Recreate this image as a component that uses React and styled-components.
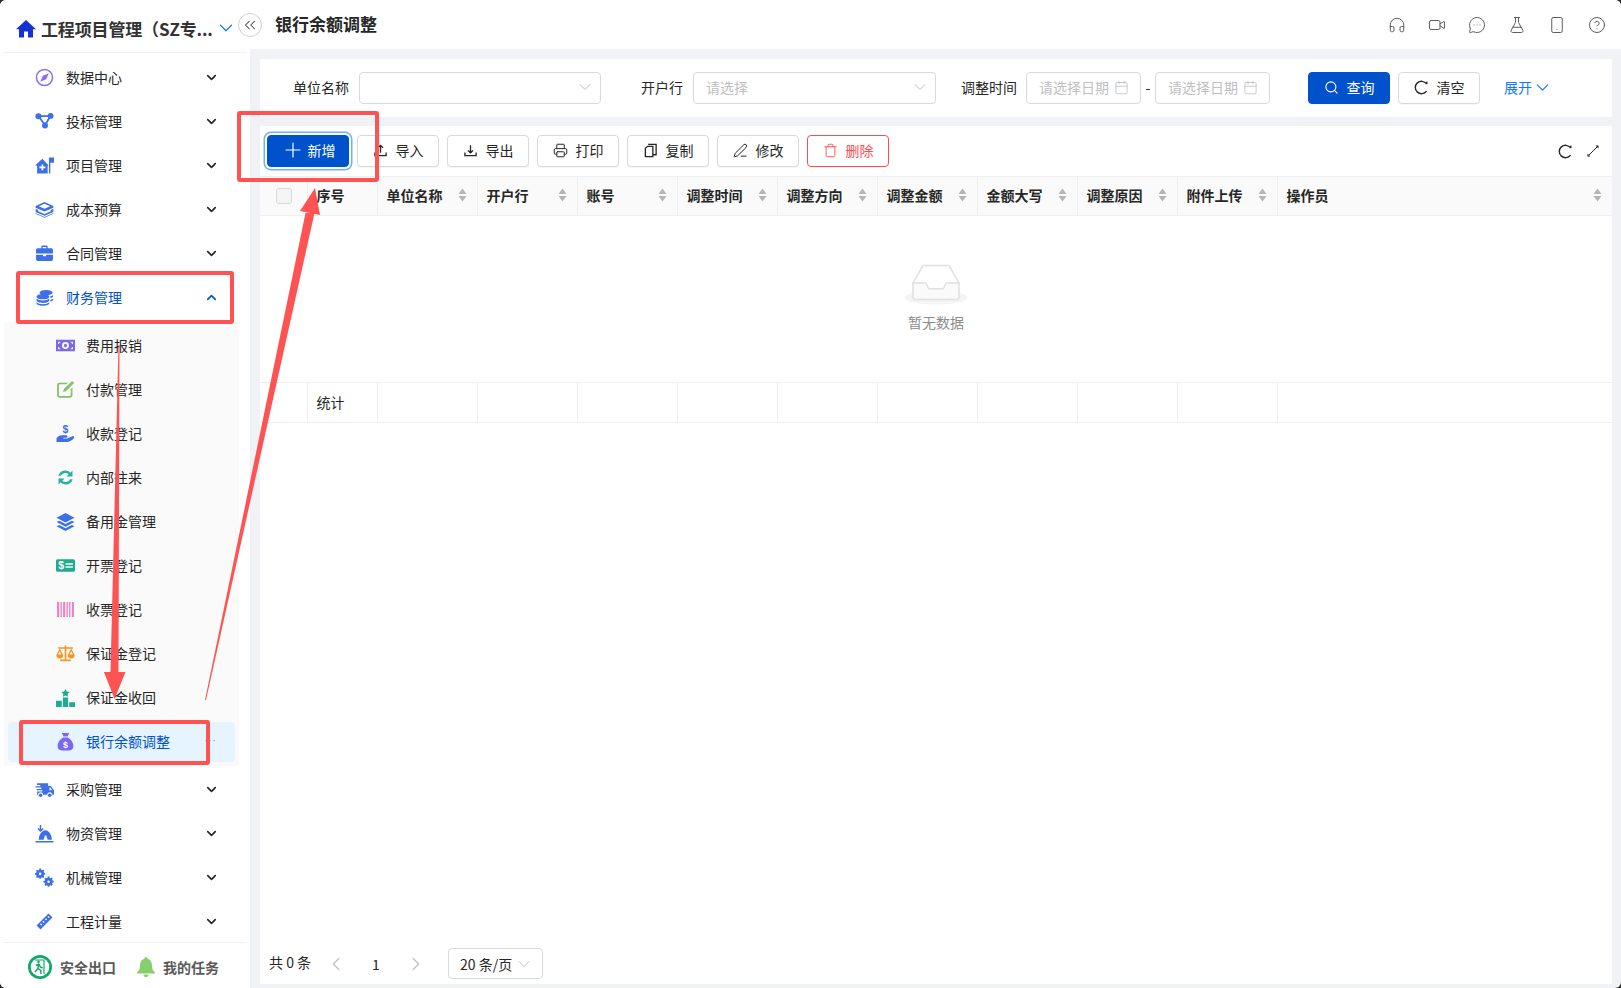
import React from "react";
import styled, { createGlobalStyle } from "styled-components";
import {
  Plus, Search, Printer, PenLine, Trash, ChevronDown, ChevronUp, ChevronsLeft,
  Calendar, Headphones, Video, MessageCircleMore, FlaskConical, Smartphone, CircleHelp,
  ChevronLeft, ChevronRight,
} from "lucide-react";

const FONT = `"Noto Sans CJK SC", "Noto Sans", "Liberation Sans", sans-serif`;

const Global = createGlobalStyle`
  html, body { margin: 0; padding: 0; background: #2b2b2b; }
  body { font-family: ${FONT}; font-size: 14px; color: #262626; }
  * { box-sizing: border-box; }
`;

const Page = styled.div`
  position: relative;
  width: 1621px;
  height: 988px;
  display: flex;
  overflow: hidden;
  border-radius: 6px;
  background: #f0f2f5;
`;

/* ---------- sidebar ---------- */
const Sidebar = styled.aside`
  width: 250px;
  flex: none;
  background: #fff;
  display: flex;
  flex-direction: column;
`;
const Brand = styled.div`
  height: 53px;
  margin: 0 4px;
  padding: 4px 0 0 12px;
  border-bottom: 1px solid #f0f0f0;
  display: flex;
  align-items: center;
  gap: 5px;
  flex: none;
`;
const BrandTitle = styled.div`
  width: 169px;
  font-size: 17px;
  font-weight: 700;
  color: #333;
  white-space: nowrap;
  letter-spacing: -0.15px;
`;
const Nav = styled.nav`
  flex: 1;
  padding-top: 3px;
  overflow: hidden;
`;
const NavRow = styled.div`
  height: 44px;
  padding: 0 31px 2px 35px;
  display: flex;
  align-items: center;
  color: ${(p) => (p.$active ? "#0052cc" : "#262626")};
  & > svg:first-child { flex: none; width: 19px; height: 19px; }
`;
const NavText = styled.span`
  margin-left: 12px;
  flex: 1;
`;
const SubMenu = styled.div`
  margin: 2px 11px 2px 4px;
  padding: 2px 0;
  background: #fafafa;
`;
const SubRow = styled.div`
  height: 44px;
  padding: 0 0 2px 52px;
  display: flex;
  align-items: center;
  color: #262626;
  & > svg:first-child { flex: none; width: 19px; height: 19px; }
`;
const SubSelected = styled.div`
  position: relative;
  height: 40px;
  margin: 2px 4px;
  padding: 0 0 2px 48px;
  display: flex;
  align-items: center;
  background: #e6f4ff;
  border-radius: 4px;
  color: #0052cc;
  & > svg:first-child { flex: none; width: 19px; height: 19px; }
`;
const SubText = styled.span`
  margin-left: 11px;
`;
const Dots = styled.span`
  position: absolute;
  right: 19px;
  top: 11px;
  font-family: "Liberation Sans", sans-serif;
  font-size: 12px;
  line-height: 14px;
  color: #6fb0f0;
`;
const SideFoot = styled.div`
  height: 46px;
  flex: none;
  margin: 0 4px;
  padding: 3px 0 0 24px;
  border-top: 1px solid #f0f0f0;
  display: flex;
  align-items: center;
  font-weight: 700;
  color: #595959;
`;
const FootLabel = styled.span`
  margin-left: ${(p) => p.$gap}px;
  margin-right: ${(p) => p.$after || 0}px;
`;
const Collapse = styled.button`
  position: absolute;
  left: 238px;
  top: 13px;
  width: 24px;
  height: 24px;
  padding: 0;
  border-radius: 50%;
  border: 1px solid #d0d0d0;
  background: #fff;
  color: #444;
  display: flex;
  align-items: center;
  justify-content: center;
`;

/* ---------- main ---------- */
const Main = styled.main`
  flex: 1;
  min-width: 0;
  display: flex;
  flex-direction: column;
`;
const TopBar = styled.header`
  height: 49px;
  flex: none;
  background: #fff;
  padding: 0 15px 0 25px;
  display: flex;
  align-items: center;
  justify-content: space-between;
`;
const PageTitle = styled.h1`
  margin: 0 0 2px;
  font-size: 17px;
  font-weight: 700;
  color: #262626;
`;
const TopIcons = styled.div`
  display: flex;
  gap: 22px;
  color: #595959;
  svg { width: 18px; height: 18px; display: block; }
`;
const FilterBar = styled.section`
  height: 58px;
  flex: none;
  margin: 10px 9px 9px 10px;
  padding: 0 0 0 33px;
  background: #fff;
  display: flex;
  align-items: center;
`;
const Label = styled.label`
  flex: none;
  margin-left: ${(p) => p.$gap || 0}px;
  margin-right: ${(p) => p.$mr || 9}px;
  padding-bottom: 2px;
  color: #262626;
`;
const Field = styled.div`
  width: ${(p) => p.$w}px;
  height: 32px;
  flex: none;
  padding: 0 ${(p) => p.$pr || 5}px 2px 12px;
  border: 1px solid #d9d9d9;
  border-radius: 4px;
  background: #fff;
  color: #bfbfbf;
  display: flex;
  align-items: center;
  justify-content: space-between;
  svg { width: ${(p) => p.$icon || 20}px; height: ${(p) => p.$icon || 20}px; flex: none; }
`;
const Dash = styled.span`
  width: 14px;
  padding-bottom: 2px;
  text-align: center;
  color: #262626;
`;
const Button = styled.button`
  height: 32px;
  width: ${(p) => p.$w || 82}px;
  flex: none;
  margin-left: ${(p) => p.$ml || 0}px;
  padding: 0 0 2px;
  border-radius: 4px;
  font: inherit;
  display: inline-flex;
  align-items: center;
  justify-content: center;
  gap: ${(p) => p.$gap || 8}px;
  border: 1px solid ${(p) => (p.$kind === "primary" ? "#0052cc" : p.$kind === "danger" ? "#ff4d4f" : "#d9d9d9")};
  background: ${(p) => (p.$kind === "primary" ? "#0052cc" : "#fff")};
  color: ${(p) => (p.$kind === "primary" ? "#fff" : p.$kind === "danger" ? "#ff4d4f" : "#262626")};
  box-shadow: ${(p) => (p.$ring ? "0 0 0 2px #fff, 0 0 0 3.5px #6fb1f5" : "0 1px 1px rgba(0,0,0,.04)")};
  svg { width: ${(p) => p.$icon || 15}px; height: ${(p) => p.$icon || 15}px; flex: none; }
`;
const ExpandLink = styled.span`
  margin-left: 24px;
  padding-bottom: 2px;
  color: #1677ff;
  display: inline-flex;
  align-items: center;
  gap: 0;
  svg { width: 21px; height: 21px; }
`;
const Card = styled.section`
  flex: 1;
  min-height: 0;
  margin: 0 9px 4px 10px;
  background: #fff;
  display: flex;
  flex-direction: column;
`;
const Toolbar = styled.div`
  height: 50px;
  flex: none;
  padding: 0 13px 0 7px;
  display: flex;
  align-items: center;
  gap: 8px;
`;
const ToolbarEnd = styled.div`
  margin-left: auto;
  display: flex;
  align-items: center;
  gap: 14px;
  color: #262626;
`;
const Row = styled.div`
  display: grid;
  grid-template-columns: 47.5px 70px repeat(9, 100px) 1fr;
  height: ${(p) => p.$h}px;
  flex: none;
  border-top: 1px solid #efefef;
  border-bottom: 1px solid #efefef;
  background: ${(p) => p.$bg || "#fff"};
`;
const Cell = styled.div`
  display: flex;
  align-items: center;
  padding: 0 9px 2px;
  border-right: 1px solid #efefef;
  font-weight: ${(p) => (p.$head ? 700 : 400)};
  color: #262626;
  justify-content: space-between;
  &:last-child { border-right: 0; }
`;
const CheckCell = styled.div`
  display: flex;
  align-items: center;
  justify-content: center;
  padding-left: 2px;
  border-right: 1px solid #efefef;
`;
const Check = styled.span`
  width: 16px;
  height: 16px;
  border: 1px solid #d9d9d9;
  border-radius: 3px;
  background: #f5f5f5;
`;
const Empty = styled.div`
  height: 166px;
  flex: none;
  padding-top: 48px;
  display: flex;
  flex-direction: column;
  align-items: center;
  color: #8c8c8c;
  svg { width: 64px; height: 41px; display: block; margin-bottom: 7px; }
`;
const Pager = styled.div`
  margin-top: auto;
  height: 36px;
  flex: none;
  padding: 0 0 5px 9px;
  display: flex;
  align-items: center;
  color: #262626;
`;
const PagerTotal = styled.span`
  width: 43px;
  padding-bottom: 3px;
  white-space: nowrap;
`;
const PagerArrow = styled.span`
  color: #bfbfbf;
  margin-left: ${(p) => p.$ml}px;
  display: flex;
  svg { width: 22px; height: 22px; }
`;
const PagerNum = styled.span`
  margin-left: 25px;
  width: 8px;
`;
const PageSize = styled.div`
  width: 95px;
  height: 31px;
  margin-left: 21px;
  padding: 0 8px 0 11px;
  border: 1px solid #d9d9d9;
  border-radius: 4px;
  display: flex;
  align-items: center;
  justify-content: space-between;
  svg { width: 20px; height: 20px; color: #bfbfbf; }
`;
const Overlay = styled.svg`
  position: absolute;
  left: 0;
  top: 0;
  width: 1621px;
  height: 988px;
  pointer-events: none;
`;

/* ---------- drawings ---------- */
const BLUE = "#3c6fe8";
const I = ({ children, c = BLUE }) => (
  <svg viewBox="0 0 18 18" fill={c}>{children}</svg>
);
const icons = {
  compass: (
    <I c="#8a6cf0">
      <circle cx="9" cy="9" r="7.6" fill="none" stroke="#8a6cf0" strokeWidth="1.4" />
      <path d="M13 5 10.6 10.6 5 13 7.4 7.4Z" />
    </I>
  ),
  share: (
    <I>
      <path d="M3.500 4h11M3.500 4l6 8.500M14.500 4l-5 8.500" stroke={BLUE} strokeWidth="1.700" fill="none" />
      <circle cx="3.300" cy="4" r="2.900" /><circle cx="14.800" cy="3.700" r="2.700" /><circle cx="9.500" cy="12.800" r="2.800" />
    </I>
  ),
  house: (
    <I>
      <path d="M7 2.700 0 9h2v7.600h10V9h1ZM6.200 8h1.600v2h2v1.600h-2v2H6.200v-2h-2V10h2Z" fillRule="evenodd" />
      <path d="M13.200 1.500h1.300v15.100h-1.300zM14.500 1.500H18v5h-3.500z" />
    </I>
  ),
  layers: (
    <I>
      <path d="M9 2 17.400 5.600v1.700L9 11 .6 7.300V5.600ZM9 3.600 3.600 6 9 8.400 14.400 6Z" fillRule="evenodd" />
      <path d="M.6 8.300 3 9.400v1.200l6 2.600 6-2.600V9.400l2.400-1.100v3L9 15 .6 11.300ZM.6 12.200 9 16l8.400-3.800V13L9 16.900.6 13Z" />
    </I>
  ),
  case: (
    <I>
      <path d="M6 4V2.500A1 1 0 0 1 7 1.500h4a1 1 0 0 1 1 1V4h3.500A1.500 1.500 0 0 1 17 5.500V9H1V5.500A1.500 1.500 0 0 1 2.500 4ZM7.300 4h3.400V2.800H7.300Z" fillRule="evenodd" />
      <path d="M1 10.200h6.500v1.500h3v-1.500H17v4.300a1.500 1.500 0 0 1-1.500 1.500h-13A1.500 1.500 0 0 1 1 14.500Z" />
    </I>
  ),
  coins: (
    <I>
      <ellipse cx="10.500" cy="4.400" rx="6.200" ry="2.600" />
      <path d="M1.500 8.200c0-1.400 2.600-2.500 6-2.500s6 1.100 6 2.500-2.600 2.500-6 2.500-6-1.100-6-2.500Z" />
      <path d="M1.500 10c1 1.200 3.300 1.800 6 1.800s5-.6 6-1.800v1.600c0 1.400-2.600 2.500-6 2.500s-6-1.100-6-2.500Z" />
      <path d="M1.500 13.500c1 1.200 3.300 1.800 6 1.800s5-.6 6-1.800v1c0 1.400-2.600 2.300-6 2.300s-6-.9-6-2.300ZM14.500 7.800c1.300-.3 2.400-.8 2.700-1.500v1.200c0 .9-1 1.500-2.700 1.900ZM14.500 11.300c1.300-.3 2.400-.8 2.700-1.500v1.200c0 .9-1 1.500-2.700 1.900Z" />
    </I>
  ),
  money: (
    <I c="#7b68ee">
      <path d="M0 3.500h18v11H0ZM9 5.700a3.300 3.300 0 1 0 0 6.600 3.300 3.300 0 0 0 0-6.600ZM9 7.300c.8 0 1.400.7 1.400 1.700S9.800 10.700 9 10.700 7.600 10 7.600 9 8.200 7.300 9 7.300ZM2 5.500v2h1v-1h1v-1ZM14 5.500v1h1v1h1v-2ZM2 10.500v2h2v-1H3v-1ZM15 10.500v1h-1v1h2v-2Z" fillRule="evenodd" />
    </I>
  ),
  edit: (
    <I c="#86c06c">
      <path d="M3 2.500h8.500l-1.600 1.600H3.600a.9.9 0 0 0-.9.9v9.300c0 .5.4.9.9.9H13a.9.9 0 0 0 .9-.9V8.700l1.700-1.700V14.700A2 2 0 0 1 13.600 16.700H3A2 2 0 0 1 1 14.700V4.500A2 2 0 0 1 3 2.500Z" />
      <path d="M15.200.9 17.200 2.900 9.500 10.600 6.700 11.400 7.500 8.600Z" />
    </I>
  ),
  hand: (
    <I>
      <path d="M.5 17v-3.700c1.200-1.700 3-2.700 5-2.700h4.200a1.200 1.200 0 0 1 0 2.400H7v.7h3.500l5-2.200c1-.4 2.300.8 1.600 1.700-1.500 1.900-4.200 3.800-7 3.800Z" />
      <text x="9" y="8.500" fontSize="10" fontWeight="700" fontFamily="Liberation Sans" textAnchor="middle">$</text>
    </I>
  ),
  sync: (
    <I c="#25b39a">
      <path d="M2.300 7.400C3 4.400 5.700 2.300 8.800 2.300c1.900 0 3.600.8 4.800 2.100l2-2v5.700H10l2-2.100a4.500 4.500 0 0 0-7.300 1.400ZM15.700 10.600c-.7 3-3.400 5.100-6.500 5.100-1.900 0-3.600-.8-4.800-2.100l-2 2V9.900H8l-2 2.100a4.500 4.500 0 0 0 7.300-1.400Z" />
    </I>
  ),
  stack: (
    <I>
      <path d="M9 1 17.500 5.500 9 10 .5 5.500ZM3 8.200 9 11.400l6-3.200 2.500 1.300L9 14 .5 9.500ZM3 12.200 9 15.400l6-3.200 2.500 1.300L9 18 .5 13.500Z" />
    </I>
  ),
  bill: (
    <I c="#1eab8e">
      <path d="M1.500 3h15A1.500 1.500 0 0 1 18 4.500v9a1.500 1.500 0 0 1-1.500 1.500h-15A1.500 1.500 0 0 1 0 13.500v-9A1.500 1.500 0 0 1 1.500 3ZM9 6.800v1.400h7V6.800ZM9 9.800v1.400h7V9.800Z" fillRule="evenodd" />
      <text x="5" y="12.700" fontSize="10" fontWeight="700" fontFamily="Liberation Sans" textAnchor="middle" fill="#fff">$</text>
    </I>
  ),
  barcode: (
    <I c="#ee7fc5">
      <path d="M1 2h2v14H1zM4.200 2h1.300v14H4.200zM6.700 2h2v14h-2zM9.900 2h1.300v14H9.900zM12.400 2h1.300v14h-1.300zM15 2h2v14h-2z" />
    </I>
  ),
  scale: (
    <I c="#f7961e">
      <path d="M2 3h6.200V1.500h1.600V3H16v1.400h-6.200v10.400H14v1.500H4v-1.500h4.200V4.400H2Z" />
      <path d="M3.600 4.200 6.900 10.500a3.300 3.300 0 0 1-6.600 0ZM3.600 6.800 2 9.900h3.200ZM14.400 4.200l3.300 6.300a3.300 3.300 0 0 1-6.600 0ZM14.400 6.800l-1.600 3.100H16Z" fillRule="evenodd" />
    </I>
  ),
  podium: (
    <I c="#1eab8e">
      <path d="M6.500 9h5v9h-5zM0 12h5.500v6H0zM12.500 13.500H18V18h-5.500z" />
      <path d="m9 1 1.300 2.400 2.700.4-2 1.900.5 2.700L9 7.200 6.500 8.400 7 5.700 5 3.800l2.700-.4Z" />
    </I>
  ),
  bag: (
    <I c="#7b68ee">
      <path d="M5.500 1h7l-1.600 3.200H7.100ZM6.800 5.200h4.400C14 6.800 16.500 10 16.500 13.200c0 2.800-2 4.300-4.500 4.300H6c-2.500 0-4.500-1.500-4.500-4.300C1.500 10 4 6.800 6.800 5.200Z" />
      <text x="9" y="15" fontSize="8.500" fontWeight="700" fontFamily="Liberation Sans" textAnchor="middle" fill="#fff">$</text>
    </I>
  ),
  truck: (
    <I>
      <path d="M4 3h8.500v2.600H15l3 4v4.400h-1.600a2.400 2.400 0 0 0-4.800 0H7.700a2.400 2.400 0 0 0-4.800 0H2v-3h5V9.700H1.500V8.500H6V7.200H.5V6H5V4.700H2V3ZM13.700 7v2.600h2.500L14.600 7Z" fillRule="evenodd" />
      <circle cx="5.300" cy="14.500" r="1.700" /><circle cx="14" cy="14.500" r="1.700" />
    </I>
  ),
  tent: (
    <I>
      <path d="M.5 16.200h17v1.300H.5ZM3.500 15c.2-4.300 2.300-8.500 6.500-9 3.300.3 5.800 4 6 9h-4l-1.300-4h-1.300L8.200 15ZM4.500 1h1.400v4l1.400-1.200.9 1L5.200 7.500 2.300 4.800l.9-1 1.300 1.200Z" />
    </I>
  ),
  gears: (
    <I>
      <path d="M5.300.7h1.900l.3 1.500 1.200.5 1.300-.8 1.300 1.300-.8 1.300.5 1.200 1.400.3v1.900l-1.400.3-.5 1.200.8 1.300-1.300 1.300-1.300-.8-1.200.5-.3 1.400H5.300L5 11.900l-1.200-.5-1.300.8-1.300-1.300.8-1.300L1.500 8.400 0 8.100V6.200l1.500-.3.500-1.200-.8-1.300 1.300-1.300 1.300.8L5 2.200ZM6.200 5.500a1.600 1.600 0 1 0 0 3.200 1.600 1.600 0 0 0 0-3.200Z" fillRule="evenodd" transform="scale(.78)" />
      <path d="M5.300.7h1.900l.3 1.500 1.200.5 1.300-.8 1.300 1.300-.8 1.300.5 1.200 1.400.3v1.900l-1.400.3-.5 1.200.8 1.300-1.300 1.300-1.300-.8-1.200.5-.3 1.400H5.300L5 11.900l-1.200-.5-1.300.8-1.300-1.300.8-1.300L1.500 8.400 0 8.100V6.200l1.500-.3.500-1.200-.8-1.300 1.300-1.300 1.300.8L5 2.200ZM6.200 5.500a1.600 1.600 0 1 0 0 3.200 1.600 1.600 0 0 0 0-3.200Z" fillRule="evenodd" transform="translate(8 7.500) scale(.78)" />
    </I>
  ),
  ruler: (
    <I>
      <path d="M12.800 1.500 16.500 5.200 5.200 16.500 1.500 12.800ZM12.600 3.700l-.9.900 1.200 1.200.9-.9ZM10.300 6l-.9.900 1.200 1.200.9-.9ZM8 8.300l-.9.900 1.200 1.200.9-.9ZM5.700 10.600l-.9.900 1.200 1.200.9-.9Z" fillRule="evenodd" />
    </I>
  ),
};

const Home = () => (
  <svg width="20" height="19" viewBox="0 0 20 19" fill="#1232d8" style={{ flex: "none" }}>
    <path d="M10 1 0 10.300h3V18.500h5v-6h4v6h5v-8.200h3Z" />
  </svg>
);
const Sort = () => (
  <svg width="9" height="14" viewBox="0 0 9 14" fill="#b5b5b5" style={{ flex: "none", marginRight: 1 }}>
    <path d="M4.500 .5 8.500 6H.5ZM.5 8h8l-4 5.500Z" />
  </svg>
);
const Tray = ({ up }) => (
  <svg viewBox="0 0 16 16" fill="none" stroke="currentColor" strokeWidth="1.400">
    <path d="M2 10v3.500h12V10" />
    <path d={up ? "M8 10.500V2.500M5.300 5 8 2.500 10.700 5" : "M8 2.500v8M5.300 8 8 10.500 10.700 8"} />
  </svg>
);
const CopyDoc = () => (
  <svg viewBox="0 0 16 16" fill="none" stroke="currentColor" strokeWidth="1.400">
    <path d="M2.500 5.500 5 3.500h5.500v11H2.500Z" />
    <path d="M5.500 1.500h8.500v11h-3.500" />
  </svg>
);
const Refresh = ({ size = 15 }) => (
  <svg width={size} height={size} viewBox="0 0 16 16" fill="none" stroke="currentColor" strokeWidth="1.500" style={{ display: "block", flex: "none" }}>
    <path d="M13.400 4.200A6.600 6.600 0 1 0 13.400 11.800" />
    <path d="M13.600 1.900v2.700" />
  </svg>
);
const Fullscreen = () => (
  <svg width="12" height="12" viewBox="0 0 12 12" fill="currentColor" stroke="currentColor" strokeWidth="1" style={{ display: "block" }}>
    <path d="M1.500 10.500 10.500 1.500" />
    <path d="M.5 11.500v-3l3 3ZM11.500 .5v3l-3-3Z" strokeWidth="0" />
  </svg>
);
const Inbox = () => (
  <svg viewBox="0 0 64 41" fill="none">
    <ellipse cx="32" cy="33.500" rx="31.500" ry="7" fill="#f5f5f5" />
    <path d="M9 19 19 1.500h26L55 19" stroke="#e0e0e0" strokeWidth="1.500" fill="#fff" />
    <path d="M9 19h12.500c2 0 1.500 5.800 4 5.800h13c2.500 0 2-5.800 4-5.800H55v14a2.500 2.500 0 0 1-2.500 2.500h-41A2.500 2.500 0 0 1 9 33Z" fill="#fafafa" stroke="#e0e0e0" strokeWidth="1.500" />
  </svg>
);
const ExitBadge = () => (
  <svg width="24" height="24" viewBox="0 0 24 24" style={{ flex: "none" }}>
    <circle cx="12" cy="12" r="12" fill="#0fa868" />
    <circle cx="12" cy="12" r="9.300" fill="#fff" />
    <path d="M7 5h9v14" stroke="#0fa868" strokeWidth="1.200" fill="none" />
    <circle cx="10.500" cy="6.800" r="1.300" fill="#0fa868" />
    <path d="M8 10.500 10.800 9l1.600 3 2.300 1M10.800 9l-.8 4.500L7 17M10 13.500l2.700 2 .3 3.500" stroke="#0fa868" strokeWidth="1.500" fill="none" />
  </svg>
);
const Bell = () => (
  <svg width="20" height="22" viewBox="0 0 20 22" fill="#86cf6c" style={{ flex: "none" }}>
    <path d="M10 1a1.500 1.500 0 0 1 1.500 1.700C14.800 3.500 16 6.500 16 10c0 3 1.200 5 3 6.500v1H1v-1C2.800 15 4 13 4 10c0-3.500 1.200-6.500 4.500-7.300A1.500 1.500 0 0 1 10 1ZM7.500 18.500h5a2.500 2.500 0 0 1-5 0Z" />
  </svg>
);

const topMenus = [
  ["compass", "数据中心"], ["share", "投标管理"], ["house", "项目管理"], ["layers", "成本预算"], ["case", "合同管理"],
];
const subMenus = [
  ["money", "费用报销"], ["edit", "付款管理"], ["hand", "收款登记"], ["sync", "内部往来"], ["stack", "备用金管理"],
  ["bill", "开票登记"], ["barcode", "收票登记"], ["scale", "保证金登记"], ["podium", "保证金收回"],
];
const lowerMenus = [
  ["truck", "采购管理"], ["tent", "物资管理"], ["gears", "机械管理"], ["ruler", "工程计量"],
];
const columns = ["单位名称", "开户行", "账号", "调整时间", "调整方向", "调整金额", "金额大写", "调整原因", "附件上传", "操作员"];
const toolButtons = [
  [<Tray up key="a" />, "导入"], [<Tray key="b" />, "导出"], [<Printer key="c" strokeWidth={1.6} />, "打印"],
  [<CopyDoc key="d" />, "复制"], [<PenLine key="e" strokeWidth={1.6} />, "修改"],
];

const MenuRow = ({ icon, label, open, active }) => (
  <NavRow $active={active}>
    {icons[icon]}
    <NavText>{label}</NavText>
    {open ? <ChevronUp size={15} strokeWidth={2.6} /> : <ChevronDown size={15} strokeWidth={2.6} />}
  </NavRow>
);

export default function App() {
  return (
    <>
      <Global />
      <Page>
        <Sidebar>
          <Brand>
            <Home />
            <BrandTitle>工程项目管理（SZ专...</BrandTitle>
            <ChevronDown size={22} color="#1677ff" strokeWidth={1.3} />
          </Brand>
          <Nav>
            {topMenus.map(([i, l]) => <MenuRow key={l} icon={i} label={l} />)}
            <MenuRow icon="coins" label="财务管理" open active />
            <SubMenu>
              {subMenus.map(([i, l]) => (
                <SubRow key={l}>{icons[i]}<SubText>{l}</SubText></SubRow>
              ))}
              <SubSelected>
                {icons.bag}
                <SubText>银行余额调整</SubText>
                <Dots>···</Dots>
              </SubSelected>
            </SubMenu>
            {lowerMenus.map(([i, l]) => <MenuRow key={l} icon={i} label={l} />)}
          </Nav>
          <SideFoot>
            <ExitBadge />
            <FootLabel $gap={8} $after={20}>安全出口</FootLabel>
            <Bell />
            <FootLabel $gap={7}>我的任务</FootLabel>
          </SideFoot>
        </Sidebar>
        <Collapse aria-label="collapse"><ChevronsLeft size={18} strokeWidth={1.4} /></Collapse>
        <Main>
          <TopBar>
            <PageTitle>银行余额调整</PageTitle>
            <TopIcons>
              <Headphones strokeWidth={1.3} />
              <Video strokeWidth={1.3} />
              <MessageCircleMore strokeWidth={1.3} />
              <FlaskConical strokeWidth={1.3} />
              <Smartphone strokeWidth={1.3} />
              <CircleHelp strokeWidth={1.3} />
            </TopIcons>
          </TopBar>
          <FilterBar>
            <Label $mr={10}>单位名称</Label>
            <Field $w={242}><span /><ChevronDown strokeWidth={1.2} /></Field>
            <Label $gap={40} $mr={10}>开户行</Label>
            <Field $w={243}>请选择<ChevronDown strokeWidth={1.2} /></Field>
            <Label $gap={25}>调整时间</Label>
            <Field $w={115} $icon={15} $pr={11}>请选择日期<Calendar strokeWidth={1.3} /></Field>
            <Dash>-</Dash>
            <Field $w={115} $icon={15} $pr={11}>请选择日期<Calendar strokeWidth={1.3} /></Field>
            <Button $kind="primary" $w={82} $ml={38}><Search strokeWidth={1.8} />查询</Button>
            <Button $w={82} $ml={8}><Refresh size={16} />清空</Button>
            <ExpandLink>展开<ChevronDown strokeWidth={1.4} /></ExpandLink>
          </FilterBar>
          <Card>
            <Toolbar>
              <Button $kind="primary" $ring $icon={24} $gap={3}><Plus strokeWidth={1.2} />新增</Button>
              {toolButtons.map(([icon, label]) => (
                <Button key={label}>{icon}{label}</Button>
              ))}
              <Button $kind="danger"><Trash strokeWidth={1.5} />删除</Button>
              <ToolbarEnd>
                <Refresh />
                <Fullscreen />
              </ToolbarEnd>
            </Toolbar>
            <Row $h={40} $bg="#fafafa">
              <CheckCell><Check /></CheckCell>
              <Cell $head>序号</Cell>
              {columns.map((c) => (
                <Cell $head key={c}>{c}<Sort /></Cell>
              ))}
            </Row>
            <Empty>
              <Inbox />
              暂无数据
            </Empty>
            <Row $h={41}>
              <Cell />
              <Cell>统计</Cell>
              {columns.map((c) => <Cell key={c} />)}
            </Row>
            <Pager>
              <PagerTotal>共 0 条</PagerTotal>
              <PagerArrow $ml={13}><ChevronLeft strokeWidth={1.3} /></PagerArrow>
              <PagerNum>1</PagerNum>
              <PagerArrow $ml={25}><ChevronRight strokeWidth={1.3} /></PagerArrow>
              <PageSize>20 条/页<ChevronDown strokeWidth={1.2} /></PageSize>
            </Pager>
          </Card>
        </Main>
        <Overlay viewBox="0 0 1621 988">
          <g fill="none" stroke="#ff5252" strokeWidth="4">
            <rect x="239" y="113" width="138" height="67" rx="1" />
            <rect x="18" y="273" width="214" height="49" rx="1" />
            <rect x="21" y="722" width="187" height="41" rx="1" />
          </g>
          <g fill="#ff5252">
            <path d="M118.500 345h1l-1 327h-8Z" />
            <path d="M104 672h21.500l-11 27Z" />
            <path d="M205 700h1l108.500-487h-9Z" />
            <path d="M315 188 300 211l20 4Z" />
          </g>
        </Overlay>
      </Page>
    </>
  );
}
